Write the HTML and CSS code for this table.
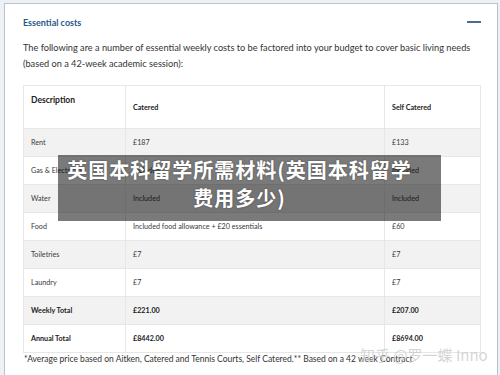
FILE: index.html
```html
<!DOCTYPE html>
<html>
<head>
<meta charset="utf-8">
<link rel="stylesheet" href="styles.css">
</head>
<body>
<div class="page">
  <div class="card">
    <div class="head">
      <h2 class="title">Essential costs</h2>
      <span class="collapse"></span>
    </div>
    <p class="intro">The following are a number of essential weekly costs to be factored into your budget to cover basic living needs (based on a 42-week academic session):</p>
    <table class="costs">
      <colgroup><col class="c1"><col class="c2"><col class="c3"></colgroup>
      <thead>
        <tr><th class="desc">Description</th><th>Catered</th><th>Self Catered</th></tr>
      </thead>
      <tbody>
        <tr class="alt"><td>Rent</td><td>£187</td><td>£133</td></tr>
        <tr><td>Gas &amp; Electricity</td><td>Included</td><td>Included</td></tr>
        <tr class="alt"><td>Water</td><td>Included</td><td>Included</td></tr>
        <tr><td>Food</td><td>Included food allowance + £20 essentials</td><td>£60</td></tr>
        <tr class="alt"><td>Toiletries</td><td>£7</td><td>£7</td></tr>
        <tr><td>Laundry</td><td>£7</td><td>£7</td></tr>
        <tr class="alt total"><td>Weekly Total</td><td>£221.00</td><td>£207.00</td></tr>
        <tr class="total"><td>Annual Total</td><td>£8442.00</td><td>£8694.00</td></tr>
      </tbody>
    </table>
    <p class="note">*Average price based on Aitken, Catered and Tennis Courts, Self Catered.** Based on a 42 week Contract</p>
  </div>
  <div class="banner">英国本科留学所需材料(英国本科留学费用多少)</div>
  <div class="mark">知乎 @罗一蝶 Inno</div>
</div>
</body>
</html>
```
FILE: styles.css
```css
html, body {
  margin: 0;
  padding: 0;
}
body {
  background: #eef1f4;
  font-family: "Lato", "Open Sans", sans-serif;
  color: #333;
  width: 500px;
  height: 375px;
  overflow: hidden;
}
.page {
  position: relative;
  width: 500px;
  height: 375px;
  padding: 3px 2px 0 4px;
  box-sizing: border-box;
}
.card {
  background: #fff;
  border: 1px solid #b7c3ce;
  border-bottom: none;
  height: 372px;
  box-sizing: border-box;
  padding: 12px 16px 0 18px;
}
.head {
  display: flex;
  justify-content: space-between;
  align-items: center;
  height: 12px;
}
.title {
  margin: 0;
  font-size: 9px;
  font-weight: 700;
  color: #2b5688;
}
.collapse {
  display: block;
  width: 14px;
  height: 1.5px;
  background: #4a6c94;
}
.intro {
  margin: 12px 0 0 0;
  font-size: 9.2px;
  line-height: 16px;
  color: #333;
}
.costs {
  margin-top: 13px;
  border-collapse: collapse;
  width: 457px;
  table-layout: fixed;
  font-size: 7.2px;
}
.c1 { width: 102px; }
.c2 { width: 259px; }
.c3 { width: 96px; }
.costs th, .costs td {
  border: 1px solid #e7e7e7;
  text-align: left;
  padding: 0 7px;
  white-space: nowrap;
  overflow: hidden;
}
.costs th {
  height: 42px;
  font-weight: 700;
  font-size: 7.2px;
  vertical-align: middle;
  color: #222;
}
.costs th.desc {
  font-size: 8.5px;
  vertical-align: top;
  padding-top: 9px;
  height: 33px;
}
.costs td {
  height: 27px;
  color: #3a3a3a;
}
.costs tr.alt td {
  background: #f2f2f2;
}
.costs tr.total td {
  font-weight: 700;
  color: #222;
}
.note {
  margin: 1px 0 0 1px;
  font-size: 8.5px;
  color: #333;
}
.banner {
  position: absolute;
  left: 58px;
  top: 155px;
  width: 383px;
  height: 66px;
  box-sizing: border-box;
  padding: 1px 22px 0 2px;
  background: rgba(0, 0, 0, 0.52);
  color: #fff;
  font-family: "Noto Sans CJK SC", sans-serif;
  font-weight: 700;
  font-size: 20px;
  line-height: 28px;
  letter-spacing: 1px;
  text-align: center;
  text-shadow: 0 0 2px rgba(0,0,0,0.4);
}
.mark {
  position: absolute;
  left: 360px;
  top: 344px;
  font-family: "Noto Sans CJK SC", sans-serif;
  font-size: 15px;
  color: rgba(170, 170, 170, 0.5);
  text-shadow: 0 0 1px rgba(255,255,255,0.7);
  white-space: nowrap;
}
```
